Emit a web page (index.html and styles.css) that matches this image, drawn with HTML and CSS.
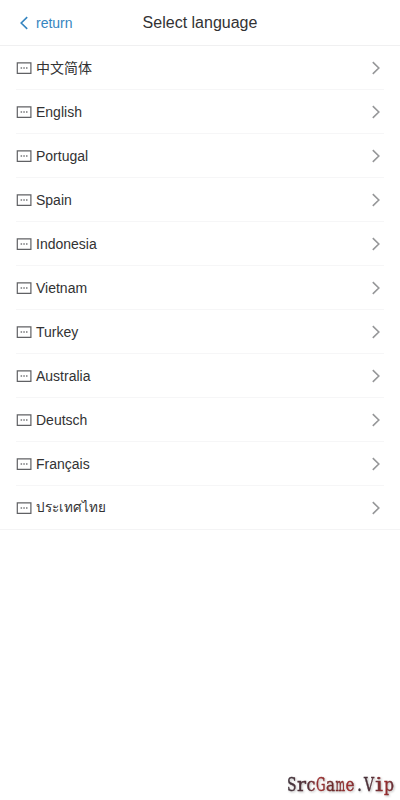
FILE: index.html
```html
<!DOCTYPE html>
<html lang="en">
<head>
<meta charset="utf-8">
<title>Select language</title>
<link rel="stylesheet" href="styles.css">
</head>
<body>
<svg class="defs" width="0" height="0"><defs>
<symbol id="msg" viewBox="0 0 16 16"><path d="M1.300 2.900h13.600v10.500h-13.600z" fill="none" stroke="#606164" stroke-width="1.200"/><path d="M4.600 7.300h1.500v1.400H4.600zM7.300 7.300h1.500v1.400H7.300zM10 7.300h1.500v1.400H10z" fill="#77787b"/></symbol>
<symbol id="arrow" viewBox="0 0 16 16"><path d="M4.800 2.200l6 5.800-6 5.800" fill="none" stroke="currentColor" stroke-width="1.600"/></symbol>
</defs></svg>
<header class="nav">
<a class="back"><svg class="icon flip"><use href="#arrow"/></svg><span>return</span></a>
<h1 class="title">Select language</h1>
</header>
<ul class="list">
<li class="row"><svg class="icon"><use href="#msg"/></svg><span class="name">中文简体</span><svg class="icon arrow"><use href="#arrow"/></svg></li>
<li class="row"><svg class="icon"><use href="#msg"/></svg><span class="name">English</span><svg class="icon arrow"><use href="#arrow"/></svg></li>
<li class="row"><svg class="icon"><use href="#msg"/></svg><span class="name">Portugal</span><svg class="icon arrow"><use href="#arrow"/></svg></li>
<li class="row"><svg class="icon"><use href="#msg"/></svg><span class="name">Spain</span><svg class="icon arrow"><use href="#arrow"/></svg></li>
<li class="row"><svg class="icon"><use href="#msg"/></svg><span class="name">Indonesia</span><svg class="icon arrow"><use href="#arrow"/></svg></li>
<li class="row"><svg class="icon"><use href="#msg"/></svg><span class="name">Vietnam</span><svg class="icon arrow"><use href="#arrow"/></svg></li>
<li class="row"><svg class="icon"><use href="#msg"/></svg><span class="name">Turkey</span><svg class="icon arrow"><use href="#arrow"/></svg></li>
<li class="row"><svg class="icon"><use href="#msg"/></svg><span class="name">Australia</span><svg class="icon arrow"><use href="#arrow"/></svg></li>
<li class="row"><svg class="icon"><use href="#msg"/></svg><span class="name">Deutsch</span><svg class="icon arrow"><use href="#arrow"/></svg></li>
<li class="row"><svg class="icon"><use href="#msg"/></svg><span class="name">Français</span><svg class="icon arrow"><use href="#arrow"/></svg></li>
<li class="row"><svg class="icon"><use href="#msg"/></svg><span class="name thai">ประเทศไทย</span><svg class="icon arrow"><use href="#arrow"/></svg></li>
</ul>
<svg class="mark" width="116" height="32" viewBox="0 0 116 32">
<defs><linearGradient id="ink" gradientUnits="userSpaceOnUse" x1="4" x2="112" y1="0" y2="0"><stop offset="0" stop-color="#40343c"/><stop offset=".2" stop-color="#583038"/><stop offset=".3" stop-color="#a02d2d"/><stop offset=".42" stop-color="#682c2c"/><stop offset=".58" stop-color="#a02d2d"/><stop offset=".67" stop-color="#40343c"/><stop offset=".8" stop-color="#583038"/><stop offset=".9" stop-color="#a02d2d"/><stop offset="1" stop-color="#583038"/></linearGradient></defs>
<g fill="url(#ink)" stroke="url(#ink)" stroke-width=".4">
<text y="23"><tspan x="4" textLength="9.500" lengthAdjust="spacingAndGlyphs">S</tspan><tspan x="14" textLength="9" lengthAdjust="spacingAndGlyphs">r</tspan><tspan x="23.500" textLength="9" lengthAdjust="spacingAndGlyphs">c</tspan><tspan x="33" textLength="9.500" lengthAdjust="spacingAndGlyphs">G</tspan><tspan x="43" textLength="9" lengthAdjust="spacingAndGlyphs">a</tspan><tspan x="52.500" textLength="9.500" lengthAdjust="spacingAndGlyphs">m</tspan><tspan x="62.500" textLength="9" lengthAdjust="spacingAndGlyphs">e</tspan><tspan x="74" textLength="5" lengthAdjust="spacingAndGlyphs">.</tspan><tspan x="81" textLength="10" lengthAdjust="spacingAndGlyphs">V</tspan><tspan x="92" textLength="8" lengthAdjust="spacingAndGlyphs">i</tspan><tspan x="101" textLength="10" lengthAdjust="spacingAndGlyphs">p</tspan></text>
</g></svg>
</body>
</html>
```

FILE: styles.css
```css
* { box-sizing: border-box; }
body { margin: 0; height: 800px; overflow: hidden; background: #fff; color: #323233; font-family: "Liberation Sans", "Noto Sans CJK SC", sans-serif; font-size: 14px; position: relative; }
.defs { position: absolute; }
.nav { display: grid; grid-template-columns: 1fr auto 1fr; height: 46px; align-items: center; border-bottom: 1px solid #f0f0f1; }
.back { display: flex; align-items: center; gap: 4px; padding-left: 16px; color: #3585c0; }
.title { margin: 0; font-size: 16px; font-weight: 400; }
.icon { width: 16px; height: 16px; flex: none; }
.flip { transform: scaleX(-1); }
.list { margin: 0; padding: 0 16px; list-style: none; border-bottom: 1px solid #f4f4f5; }
.row { display: flex; align-items: center; gap: 4px; height: 44px; border-bottom: 1px solid #f6f6f7; }
.row:last-child { height: 43px; border-bottom: 0; }
.name { flex: 1; line-height: 24px; }
.thai { font-size: 13.5px; line-height: 26px; padding-top: 1px; }
.arrow { color: #969799; }
.mark { position: absolute; right: 1px; bottom: 0; font: 18px "DejaVu Serif", serif; filter: drop-shadow(1px 1px 1px #bbb); }
```
